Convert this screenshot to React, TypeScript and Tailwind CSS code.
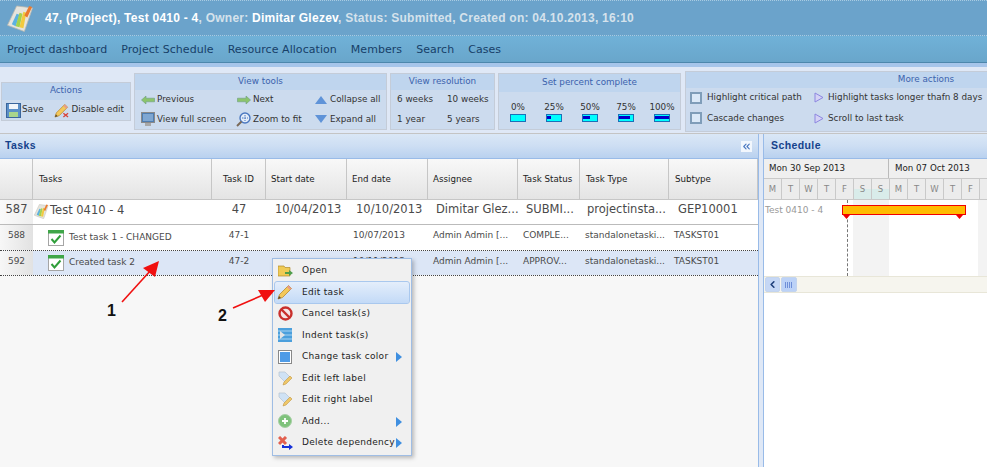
import type { ReactNode } from 'react'
import { ChevronsLeft, ChevronLeft } from 'lucide-react'

const columns = [
  { label: 'Tasks', w: 'w-[179px] pl-[6px]' },
  { label: 'Task ID', w: 'w-[54px] justify-center' },
  { label: 'Start date', w: 'w-[81px] pl-[5px]' },
  { label: 'End date', w: 'w-[81px] pl-[5px]' },
  { label: 'Assignee', w: 'w-[90px] pl-[5px]' },
  { label: 'Task Status', w: 'w-[62px] pl-[5px]' },
  { label: 'Task Type', w: 'w-[89px] pl-[6px]' },
  { label: 'Subtype', w: 'w-[89px] pl-[6px]' },
]

function ProjectIcon({ size = 16 }: { size?: number }) {
  return (
    <svg width={size} height={size} viewBox="0 0 28 28">
      <path d="M0.500 21 L10 1 L26.500 3 L18 27.500 Z" fill="#e6e4dc" stroke="#b9b7ae" strokeWidth="0.8" />
      <path d="M5 20 L10 9 L13 10 L9 22 Z" fill="#5cb2e0" />
      <path d="M9 22 L13 8 L16 9 L13 23 Z" fill="#a5d24c" />
      <path d="M13 23 L17 7 L20 8 L17 24 Z" fill="#f2ca3e" />
      <path d="M18 11 L23 1 L26 2 L21 13 Z" fill="#ea7a2e" />
    </svg>
  )
}

function TaskIcon() {
  return (
    <svg width="16" height="16" viewBox="0 0 16 16">
      <rect x="0.5" y="0.5" width="15" height="15" fill="#fff" stroke="#a5a5a5" />
      <rect x="0" y="0" width="16" height="3.5" fill="#3fa648" />
      <path d="M3.5 9 L6.5 12.5 L12.5 5.5" fill="none" stroke="#2f9e3a" strokeWidth="2" />
    </svg>
  )
}

function PencilIcon({ size = 16, mark }: { size?: number; mark?: boolean }) {
  return (
    <svg width={size} height={size} viewBox="0 0 16 16">
      <path d="M1 15 L2.500 10.500 L11.500 1.500 L14.500 4.500 L5.500 13.500 Z" fill="#f3c85a" stroke="#b98a32" strokeWidth="0.8" />
      <path d="M11.500 1.500 L14.500 4.500 L13 6 L10 3 Z" fill="#e69a8c" />
      <path d="M1 15 L2 12 L4 14 Z" fill="#5b4a32" />
      {mark && <path d="M10 11 L15 15 M15 11 L10 15" stroke="#d8453a" strokeWidth="1.4" />}
    </svg>
  )
}

function SaveIcon() {
  return (
    <svg width="15" height="15" viewBox="0 0 15 15">
      <rect x="0.5" y="0.5" width="14" height="14" fill="#5b8fc8" stroke="#3a659c" />
      <rect x="3" y="1" width="9" height="5" fill="#f1f5fa" />
      <rect x="3" y="9" width="9" height="5" fill="#a9d48c" />
    </svg>
  )
}

function ArrowIcon({ dir }: { dir: 'left' | 'right' }) {
  return (
    <svg width="14" height="10" viewBox="0 0 14 10">
      {dir === 'left' ? (
        <path d="M0.5 5 L5 1 L5 3.2 L13.5 3.2 L13.5 6.8 L5 6.8 L5 9 Z" fill="#8cc46c" stroke="#6b9e80" strokeWidth="0.6" />
      ) : (
        <path d="M13.5 5 L9 1 L9 3.2 L0.5 3.2 L0.5 6.8 L9 6.8 L9 9 Z" fill="#8cc46c" stroke="#6b9e80" strokeWidth="0.6" />
      )}
    </svg>
  )
}

function MonitorIcon() {
  return (
    <svg width="14" height="15" viewBox="0 0 14 15">
      <rect x="0.5" y="0.5" width="13" height="10" fill="#4f7db0" stroke="#8a8a8a" />
      <rect x="2" y="2" width="10" height="7" fill="#7fa7d2" />
      <rect x="4" y="11" width="6" height="3" fill="#a8a8a8" />
    </svg>
  )
}

function ZoomIcon() {
  return (
    <svg width="15" height="15" viewBox="0 0 15 15">
      <circle cx="9" cy="6" r="5" fill="#e3ecf8" stroke="#4a78c0" strokeWidth="1.4" />
      <path d="M9 3 V9 M6 6 H12" stroke="#4a78c0" strokeDasharray="1.5 1" />
      <path d="M5.5 9.5 L1 14" stroke="#7b6a58" strokeWidth="2" />
    </svg>
  )
}

function TriangleIcon({ up }: { up: boolean }) {
  return (
    <svg width="12" height="8" viewBox="0 0 12 8">
      <path d={up ? 'M6 0 L12 8 L0 8 Z' : 'M0 0 L12 0 L6 8 Z'} fill="#5f93d8" />
    </svg>
  )
}

function ToolItem({ icon, label }: { icon: ReactNode; label: string }) {
  return (
    <div className="flex items-center gap-[2px] whitespace-nowrap">
      <span className="flex w-[15px] justify-center">{icon}</span>
      <span>{label}</span>
    </div>
  )
}

function Group({ title, className, head = 'h-[16px]', children }: { title: string; className: string; head?: string; children: ReactNode }) {
  return (
    <div className={`shrink-0 border border-[#c4ccd8] bg-[#ccdbee] ${className}`}>
      <div className={`flex items-center justify-center bg-[#bfd5ee] text-[#3b62ad] ${head}`}>{title}</div>
      {children}
    </div>
  )
}

function PercentBar({ label, fill }: { label: string; fill: number }) {
  return (
    <div className="flex w-[36px] flex-col items-center leading-[11px]">
      <span>{label}</span>
      <div className="mt-[1px] flex h-[8px] w-[16px] items-center border border-[#1c6fb8] bg-[#00ffff]">
        <div className="h-[3px] bg-[#0000c8]" style={{ width: `${fill}%` }} />
      </div>
    </div>
  )
}

function Checkbox() {
  return <span className="h-[12px] w-[12px] shrink-0 border-2 border-[#7f9db9] bg-[#dbe9f8]" />
}

function PlayIcon() {
  return (
    <svg width="10" height="11" viewBox="0 0 10 11">
      <path d="M1 1 L9 5.5 L1 10 Z" fill="#d5d2f5" stroke="#8c86e0" />
    </svg>
  )
}

function TableHeaderCell({ label, w }: { label: string; w: string }) {
  return <div className={`flex h-full shrink-0 items-center border-r border-[#c6c6c6] pt-[2px] ${w}`}>{label}</div>
}

function PanelTitle({ title }: { title: string }) {
  return <span className="font-['Liberation_Sans',sans-serif] text-[10.5px] font-bold tracking-[0.4px] text-[#15428b]">{title}</span>
}

const panelHead = 'flex h-[25px] shrink-0 items-center border-b border-[#99bbe8] bg-gradient-to-b from-[#dae7f6] via-[#cddef3] to-[#b9d1ef]'

function TaskRow({ num, name, id, end, assignee, status, selected }: { num: string; name: string; id: string; end: string; assignee: string; status: string; selected?: boolean }) {
  return (
    <div className={`flex shrink-0 items-center text-[9px] ${selected ? 'h-[26px] border-y border-dotted border-[#444]' : 'h-[25px]'}`}>
      <div className="flex h-full w-[33px] shrink-0 items-center justify-center bg-gradient-to-r from-[#f7f7f7] to-[#e2e2e2] pb-[3px]">{num}</div>
      <div className={`flex h-full flex-1 items-center ${selected ? 'bg-[#dce6f6]' : 'bg-white'}`}>
        <div className="flex w-[179px] shrink-0 items-center gap-[5px] pl-[15px]">
          <TaskIcon />
          <span className="whitespace-nowrap">{name}</span>
        </div>
        <div className="w-[54px] shrink-0 pb-[3px] text-center">{id}</div>
        <div className="w-[81px] shrink-0" />
        <div className="w-[81px] shrink-0 whitespace-nowrap pb-[3px] pl-[6px]">{end}</div>
        <div className="w-[90px] shrink-0 whitespace-nowrap pb-[3px] pl-[5px]">{assignee}</div>
        <div className="w-[62px] shrink-0 whitespace-nowrap pb-[3px] pl-[5px]">{status}</div>
        <div className="w-[89px] shrink-0 whitespace-nowrap pb-[3px] pl-[5px]">standalonetaski...</div>
        <div className="w-[89px] shrink-0 whitespace-nowrap pb-[3px] pl-[5px]">TASKST01</div>
      </div>
    </div>
  )
}

function MenuItem({ icon, label, active, more }: { icon: ReactNode; label: string; active?: boolean; more?: boolean }) {
  return (
    <div className={`relative flex h-[21.5px] items-center rounded-[2px] pl-[2px] tracking-[0.3px] ${active ? 'bg-gradient-to-b from-[#e4eefb] to-[#c3daf7] outline outline-[#a9c8ee]' : ''}`}>
      <span className="flex w-[16px] justify-center">{icon}</span>
      <span className="ml-[9px] whitespace-nowrap">{label}</span>
      {more && (
        <svg className="absolute right-[7px] top-[6px]" width="6" height="10" viewBox="0 0 6 10">
          <path d="M0 0 L6 5 L0 10 Z" fill="#3f8fe0" />
        </svg>
      )}
    </div>
  )
}

function LabelIcon() {
  return (
    <svg width="15" height="15" viewBox="0 0 15 15">
      <path d="M1 1 H7 L12 6 L7 11 L1 5 Z" fill="#cfe2f5" stroke="#b6c3d0" strokeWidth="0.7" />
      <path d="M5 14 L6 11 L12 5 L14 7 L8 13 Z" fill="#efc768" stroke="#b98a32" strokeWidth="0.5" />
    </svg>
  )
}

function ContextMenu() {
  return (
    <div className="absolute left-[272px] top-[258px] w-[140px] border border-[#9fbde4] bg-[#f0f0f0] px-[2px] py-[1px] text-[9px] text-[#222] shadow-[2px_2px_4px_rgba(0,0,0,0.25)]">
      <MenuItem
        label="Open"
        icon={
          <svg width="15" height="13" viewBox="0 0 15 13">
            <path d="M0 2 H6 L7 3.5 H12 V12 H0 Z" fill="#f0cb55" stroke="#b08b2c" strokeWidth="0.7" />
            <path d="M7 8 H11 V6 L15 9 L11 12 V10 H7 Z" fill="#4f9e4c" />
          </svg>
        }
      />
      <MenuItem label="Edit task" active icon={<PencilIcon />} />
      <MenuItem
        label="Cancel task(s)"
        icon={
          <svg width="15" height="15" viewBox="0 0 15 15">
            <circle cx="7.5" cy="7.5" r="6" fill="#f5e5e5" stroke="#c9302c" strokeWidth="2.4" />
            <path d="M3.5 3.5 L11.5 11.5" stroke="#c9302c" strokeWidth="2.4" />
          </svg>
        }
      />
      <MenuItem
        label="Indent task(s)"
        icon={
          <svg width="14" height="14" viewBox="0 0 14 14">
            <rect width="14" height="14" fill="#4b9fdc" />
            <path d="M0 3 H14 M0 7 H14 M0 11 H14" stroke="#a8d4f2" />
            <path d="M2 3 L7 7 L2 11 Z" fill="#e4e4e4" />
          </svg>
        }
      />
      <MenuItem
        label="Change task color"
        more
        icon={
          <svg width="14" height="14" viewBox="0 0 14 14">
            <rect x="0.5" y="0.5" width="13" height="13" fill="#fff" stroke="#888" />
            <rect x="2" y="2" width="10" height="10" fill="#4f9be6" />
          </svg>
        }
      />
      <MenuItem label="Edit left label" icon={<LabelIcon />} />
      <MenuItem label="Edit right label" icon={<LabelIcon />} />
      <MenuItem
        label="Add..."
        more
        icon={
          <svg width="14" height="14" viewBox="0 0 14 14">
            <circle cx="7" cy="7" r="6.5" fill="#7fc27b" stroke="#a7cfa5" />
            <path d="M7 4 V10 M4 7 H10" stroke="#fff" strokeWidth="1.8" />
          </svg>
        }
      />
      <MenuItem
        label="Delete dependency"
        more
        icon={
          <svg width="15" height="14" viewBox="0 0 15 14">
            <path d="M1 1 L8 8 M8 1 L1 8" stroke="#e2604f" strokeWidth="3" />
            <path d="M4 9 V12 H11 V14 L15 11 L11 8 V10 H6 V9 Z" fill="#1530d8" />
          </svg>
        }
      />
    </div>
  )
}

function Callouts() {
  return (
    <>
      <svg className="pointer-events-none absolute left-0 top-0" width="987" height="467" viewBox="0 0 987 467">
        <path d="M122 302 L151 270" stroke="#f01010" strokeWidth="1.6" />
        <path d="M159 261 L143 268 L155 277 Z" fill="#f01010" />
        <path d="M233 308 L263 295" stroke="#f01010" strokeWidth="1.6" />
        <path d="M275 290 L258 290 L265 302 Z" fill="#f01010" />
      </svg>
      <span className="absolute left-[107px] top-[302px] font-['Liberation_Sans',sans-serif] text-[16px] font-bold leading-[18px] text-[#111]">1</span>
      <span className="absolute left-[218px] top-[307px] font-['Liberation_Sans',sans-serif] text-[16px] font-bold leading-[18px] text-[#111]">2</span>
    </>
  )
}

function WeekDays({ days }: { days: string[] }) {
  return (
    <>
      {days.map((d, i) => (
        <div
          key={i}
          className={`flex h-full w-[18px] shrink-0 items-center justify-center border-r border-[#c9c9c9] ${d === 'S' ? 'bg-gradient-to-b from-[#ececec] from-50% to-[#d9ecea] to-50%' : ''}`}
        >
          {d}
        </div>
      ))}
    </>
  )
}

function Schedule() {
  return (
    <div className="flex w-[223px] shrink-0 flex-col overflow-hidden bg-white">
      <div className={`${panelHead} pl-[7px]`}>
        <PanelTitle title="Schedule" />
      </div>
      <div className="flex h-[19px] shrink-0 bg-[#efefef] text-[8.7px] text-[#222]">
        <div className="flex w-[125px] shrink-0 items-center border-r border-[#bbb] pl-[5px] pt-[1px]">Mon 30 Sep 2013</div>
        <div className="flex w-[98px] shrink-0 items-center whitespace-nowrap pl-[6px] pt-[1px]">Mon 07 Oct 2013</div>
      </div>
      <div className="flex h-[22px] shrink-0 overflow-hidden border-y border-[#c9c9c9] bg-[#ececec] text-[8.5px] text-[#888]">
        <WeekDays days={['M', 'T', 'W', 'T', 'F', 'S', 'S', 'M', 'T', 'W', 'T', 'F']} />
      </div>
      <div className="relative h-[76px] shrink-0 text-[9px] text-[#999]">
        <div className="absolute left-[89px] top-0 h-full w-[36px] bg-[#f3f3f3]" />
        <div className="absolute left-[214px] top-0 h-full w-[9px] bg-[#f3f3f3]" />
        <div className="absolute left-[83px] top-0 h-full border-l border-dashed border-[#777]" />
        <span className="absolute left-[1px] top-[4px] whitespace-nowrap">Test 0410 - 4</span>
        <div className="absolute left-[78px] top-[5px] h-[10px] w-[124px] border border-[#f00000] bg-[#ffbb00]" />
        <svg className="absolute left-[78px] top-[15px]" width="124" height="4" viewBox="0 0 124 4">
          <path d="M1 0 H8 L4.500 4 Z M114 0 H121 L117.500 4 Z" fill="#f00000" />
        </svg>
      </div>
      <div className="flex h-[17px] shrink-0 items-center gap-[1px] border-y border-[#e8e6d8] bg-[#f6f5ee] pl-[1px]">
        <div className="flex h-[15px] w-[15px] items-center justify-center rounded-[2px] border border-[#c3d4ee] bg-[#c5d7f5]">
          <ChevronLeft size={11} strokeWidth={3.5} color="#1f3f7a" />
        </div>
        <div className="flex h-[15px] w-[16px] items-center justify-center rounded-[2px] border border-[#c3d4ee] bg-[#bcd2f7]">
          <span className="h-[6px] w-[8px] bg-[repeating-linear-gradient(90deg,#6f8fd8_0,#6f8fd8_1px,transparent_1px,transparent_2px)]" />
        </div>
      </div>
    </div>
  )
}

function Tasks() {
  return (
    <div className="flex w-[759px] shrink-0 flex-col border-r border-[#99bbe8] bg-[#f7f7f7] text-[#4a4a4a]">
      <div className={`${panelHead} justify-between pl-[5px] pr-[6px]`}>
        <PanelTitle title="Tasks" />
        <div className="flex h-[11px] w-[11px] items-center justify-center bg-[#f2f7fd]">
          <ChevronsLeft size={11} strokeWidth={2.5} color="#4a78c0" />
        </div>
      </div>
      <div className="flex h-[41px] shrink-0 items-center border-b border-[#c6c6c6] bg-gradient-to-b from-[#f8f8f8] to-[#e4e4e4] text-[8.7px] text-[#222]">
        <div className="h-full w-[33px] shrink-0 border-r border-[#c6c6c6]" />
        {columns.map((c) => (
          <TableHeaderCell key={c.label} label={c.label} w={c.w} />
        ))}
      </div>
      <div className="flex h-[25px] shrink-0 items-center border-b border-[#bbb] bg-white text-[11.5px]">
        <div className="flex h-full w-[33px] shrink-0 items-center justify-center bg-gradient-to-r from-[#fafafa] to-[#eeeeee] pb-[5px]">587</div>
        <div className="flex w-[179px] shrink-0 items-center gap-[1px] pb-[2px] pl-[1px]">
          <ProjectIcon size={15} />
          <span>Test 0410 - 4</span>
        </div>
        <div className="w-[54px] shrink-0 pb-[5px] text-center">47</div>
        <div className="w-[81px] shrink-0 whitespace-nowrap pb-[5px] pl-[9px]">10/04/2013</div>
        <div className="w-[81px] shrink-0 whitespace-nowrap pb-[5px] pl-[9px]">10/10/2013</div>
        <div className="w-[90px] shrink-0 whitespace-nowrap pb-[5px] pl-[8px]">Dimitar Glez...</div>
        <div className="w-[62px] shrink-0 whitespace-nowrap pb-[5px] pl-[8px]">SUBMI...</div>
        <div className="w-[89px] shrink-0 whitespace-nowrap pb-[5px] pl-[7px]">projectinsta...</div>
        <div className="w-[89px] shrink-0 whitespace-nowrap pb-[5px] pl-[9px]">GEP10001</div>
      </div>
      <TaskRow num="588" name="Test task 1 - CHANGED" id="47-1" end="10/07/2013" assignee="Admin Admin [..." status="COMPLE..." />
      <TaskRow num="592" name="Created task 2" id="47-2" end="10/11/2013" assignee="Admin Admin [..." status="APPROV..." selected />
    </div>
  )
}

export default function App() {
  return (
    <div className="relative h-[467px] w-[987px] overflow-hidden bg-white font-['DejaVu_Sans',sans-serif]">
      {/* Title bar */}
      <header className="flex h-[36px] items-center border-y border-dotted border-[#a8cbe2] bg-[#6ba3cb] pl-[7px] font-['Liberation_Sans',sans-serif] text-[12px] font-bold tracking-[0.25px]">
        <ProjectIcon size={27} />
        <p className="ml-[11px] whitespace-nowrap text-[#d5e2ec]">
          <span className="text-white">47, (Project), Test 0410 - 4</span>, Owner: <span className="text-white">Dimitar Glezev</span>, Status: Submitted, Created on: 04.10.2013, 16:10
        </p>
      </header>

      {/* Nav */}
      <nav className="flex h-[27px] items-center gap-[14px] border-b border-[#4d87ac] bg-gradient-to-b from-[#70b1d8] to-[#69a6cb] pl-[7px] pt-[2px] text-[11px] tracking-[0.05px] text-[#173f68]">
        <span>Project dashboard</span>
        <span>Project Schedule</span>
        <span>Resource Allocation</span>
        <span>Members</span>
        <span>Search</span>
        <span>Cases</span>
      </nav>
      <div className="h-[4px] bg-[#a6c5ea]" />

      {/* Ribbon */}
      <div className="flex h-[67px] items-center gap-[3px] overflow-hidden border-b border-[#c4c4c4] bg-[#dfe8f6] pl-[1px] pt-[2px] text-[8.8px] text-[#333]">
        <Group title="Actions" className="w-[130px]" head="h-[17px]">
          <div className="flex h-[20px] items-center gap-[10px] pl-[4px] pt-[1px]">
            <div className="flex items-center gap-[1px]">
              <SaveIcon />
              <span>Save</span>
            </div>
            <div className="flex items-center gap-[3px]">
              <PencilIcon size={15} mark />
              <span>Disable edit</span>
            </div>
          </div>
        </Group>
        <Group title="View tools" className="w-[253px]">
          <div className="grid h-[39px] grid-cols-[96px_77px_auto] content-center gap-y-[5px] pl-[5px] pt-[2px]">
            <ToolItem icon={<ArrowIcon dir="left" />} label="Previous" />
            <ToolItem icon={<ArrowIcon dir="right" />} label="Next" />
            <ToolItem icon={<TriangleIcon up />} label="Collapse all" />
            <ToolItem icon={<MonitorIcon />} label="View full screen" />
            <ToolItem icon={<ZoomIcon />} label="Zoom to fit" />
            <ToolItem icon={<TriangleIcon up={false} />} label="Expand all" />
          </div>
        </Group>
        <Group title="View resolution" className="w-[105px]">
          <div className="grid h-[39px] grid-cols-[50px_auto] content-center gap-y-[7px] pl-[6px] pt-[1px]">
            <span>6 weeks</span>
            <span>10 weeks</span>
            <span>1 year</span>
            <span>5 years</span>
          </div>
        </Group>
        <Group title="Set percent complete" className="w-[183px]" head="h-[18px]">
          <div className="flex h-[37px] items-center pl-[1px] pt-[3px]">
            <PercentBar label="0%" fill={0} />
            <PercentBar label="25%" fill={30} />
            <PercentBar label="50%" fill={50} />
            <PercentBar label="75%" fill={75} />
            <PercentBar label="100%" fill={100} />
          </div>
        </Group>
        <div className="ml-[1px] w-[482px] shrink-0 border border-[#c4ccd8] bg-[#ccdbee]">
          <div className="flex h-[16px] items-center justify-center bg-[#bfd5ee] text-[#3b62ad]">More actions</div>
          <div className="grid h-[43px] grid-cols-[124px_auto] content-center gap-y-[7px] pb-[2px] pl-[4px]">
            <div className="flex items-center gap-[5px] whitespace-nowrap">
              <Checkbox />
              <span>Highlight critical path</span>
            </div>
            <div className="flex items-center gap-[4px] whitespace-nowrap">
              <PlayIcon />
              <span>Highlight tasks longer thafn 8 days</span>
            </div>
            <div className="flex items-center gap-[5px] whitespace-nowrap">
              <Checkbox />
              <span>Cascade changes</span>
            </div>
            <div className="flex items-center gap-[4px] whitespace-nowrap">
              <PlayIcon />
              <span>Scroll to last task</span>
            </div>
          </div>
        </div>
      </div>

      {/* Main */}
      <main className="flex h-[333px]">
        <Tasks />
        <div className="w-[5px] shrink-0 border-r border-[#99bbe8] bg-[#dfe8f6]" />
        <Schedule />
      </main>

      <ContextMenu />
      <Callouts />
    </div>
  )
}
